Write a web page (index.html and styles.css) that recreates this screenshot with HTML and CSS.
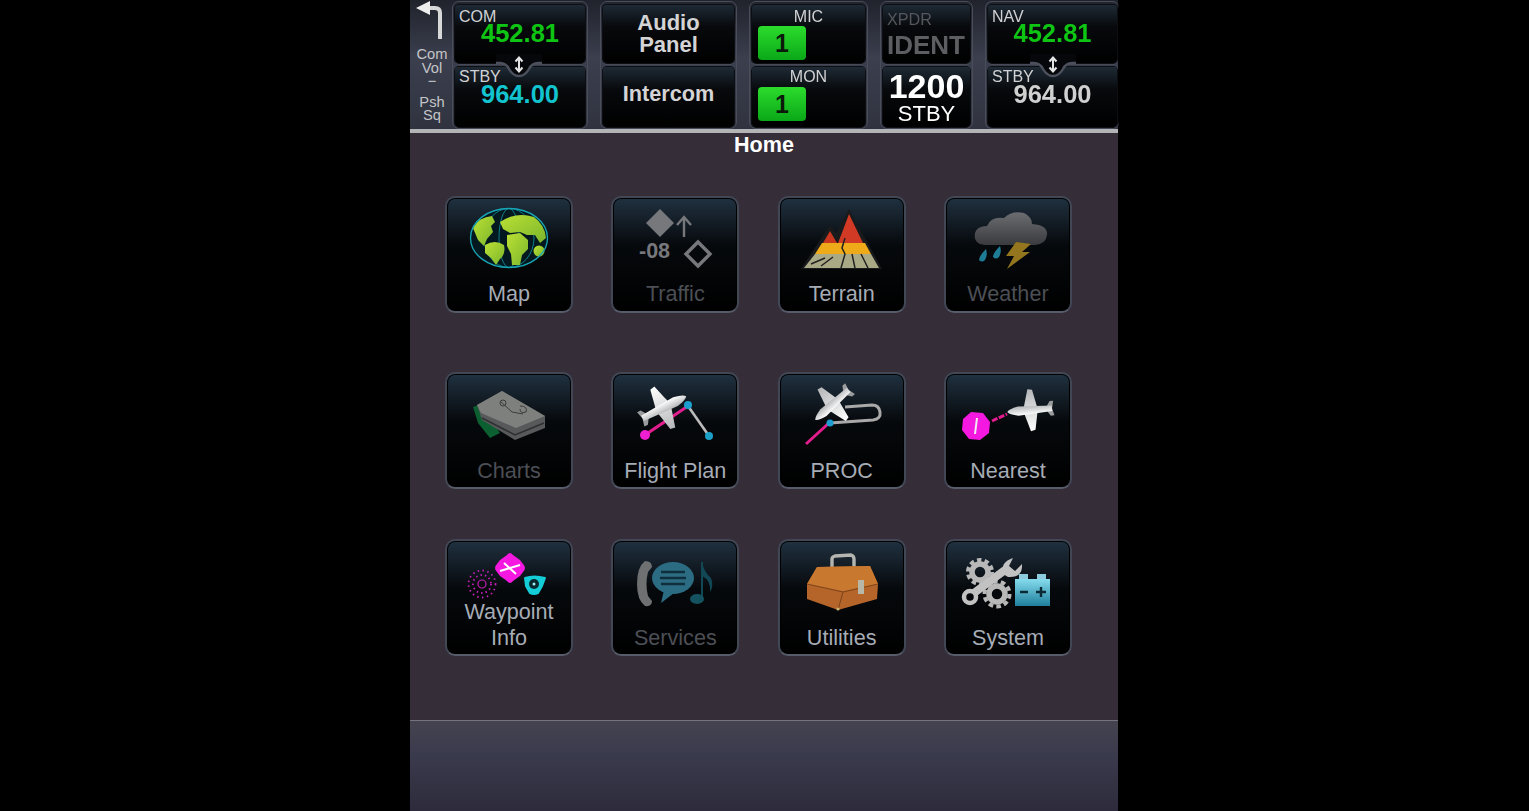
FILE: index.html
```html
<!DOCTYPE html>
<html lang="en">
<head>
<meta charset="UTF-8">
<meta name="viewport" content="width=device-width, initial-scale=1.0">
<title>Home</title>
<link rel="stylesheet" href="styles.css">
</head>
<body>
<svg class="defs" width="0" height="0">
  <defs>
    <linearGradient id="planeFill" x1="0" y1="0" x2="0" y2="1">
      <stop offset="0" stop-color="#ffffff"/>
      <stop offset="1" stop-color="#b4b6b8"/>
    </linearGradient>
    <linearGradient id="batteryFill" x1="0" y1="0" x2="0" y2="1">
      <stop offset="0" stop-color="#86dcee"/>
      <stop offset="1" stop-color="#1f7f9c"/>
    </linearGradient>
    <linearGradient id="cloudFill" x1="0" y1="0" x2="0" y2="1">
      <stop offset="0" stop-color="#6c6d70"/>
      <stop offset="1" stop-color="#3a3b3e"/>
    </linearGradient>
    <linearGradient id="globeFill" x1="0" y1="0" x2="1" y2="1">
      <stop offset="0" stop-color="#bce034"/>
      <stop offset="1" stop-color="#7ab62c"/>
    </linearGradient>
    <symbol id="plane" viewBox="-26 -24 52 48" overflow="visible">
      <path d="M-7 -2L-3 -22L2 -23L8 -2L8 2L2 23L-3 22L-7 2Z" fill="url(#planeFill)"/>
      <path d="M-25 -8L-21 -8L-17 -2L-17 2L-21 8L-25 8L-23 0Z" fill="#9a9c9e"/>
      <path d="M-23 -3L14 -5Q24 -3 26 0Q24 3 14 5L-23 3Z" fill="url(#planeFill)"/>
    </symbol>
  </defs>
</svg>

<div class="frame">
  <header class="radio-bar">
    <div class="knob-help">
      <svg class="back-arrow" width="32" height="40" viewBox="0 0 32 40">
        <path d="M27 39V13Q27 8 22 8H12" fill="none" stroke="#d8d8d8" stroke-width="4"/>
        <path d="M3 8L17 1V15Z" fill="#eeeeee"/>
      </svg>
      <div class="knob-text">Com<br>Vol<br>&minus;</div>
      <div class="knob-text knob-push">Psh<br>Sq</div>
    </div>

    <div class="group group-com">
      <div class="cell">
        <div class="cell-label">COM</div>
        <div class="freq green">452.81</div>
      </div>
      <div class="cell">
        <div class="cell-label">STBY</div>
        <div class="freq cyan">964.00</div>
      </div>
      <svg class="swap" width="46" height="24" viewBox="0 0 46 24">
        <path d="M0 9H4Q10 9 13 15Q17 22 23 22Q29 22 33 15Q36 9 42 9H46V0H0Z" fill="#06070a"/>
        <path d="M0 9H4Q10 9 13 15Q17 22 23 22Q29 22 33 15Q36 9 42 9H46" fill="none" stroke="#4b505c" stroke-width="2.5"/>
        <path d="M23 4V17M19.5 7.5L23 3.5L26.5 7.5M19.5 13.5L23 17.5L26.5 13.5" fill="none" stroke="#e4e4e4" stroke-width="2"/>
      </svg>
    </div>

    <div class="group group-audio">
      <div class="cell cell-center"><div class="audio-text">Audio<br>Panel</div></div>
      <div class="cell cell-center"><div class="intercom-text">Intercom</div></div>
    </div>

    <div class="group group-mic">
      <div class="cell">
        <div class="cell-label centered">MIC</div>
        <div class="channel">1</div>
      </div>
      <div class="cell">
        <div class="cell-label centered">MON</div>
        <div class="channel">1</div>
      </div>
    </div>

    <div class="group group-xpdr">
      <div class="cell">
        <div class="xpdr-label">XPDR</div>
        <div class="ident">IDENT</div>
      </div>
      <div class="cell cell-squawk">
        <div class="squawk">1200</div>
        <div class="squawk-mode">STBY</div>
      </div>
    </div>

    <div class="group group-nav">
      <div class="cell">
        <div class="cell-label">NAV</div>
        <div class="freq green">452.81</div>
      </div>
      <div class="cell">
        <div class="cell-label">STBY</div>
        <div class="freq grey">964.00</div>
      </div>
      <svg class="swap" width="46" height="24" viewBox="0 0 46 24">
        <path d="M0 9H4Q10 9 13 15Q17 22 23 22Q29 22 33 15Q36 9 42 9H46V0H0Z" fill="#06070a"/>
        <path d="M0 9H4Q10 9 13 15Q17 22 23 22Q29 22 33 15Q36 9 42 9H46" fill="none" stroke="#4b505c" stroke-width="2.5"/>
        <path d="M23 4V17M19.5 7.5L23 3.5L26.5 7.5M19.5 13.5L23 17.5L26.5 13.5" fill="none" stroke="#e4e4e4" stroke-width="2"/>
      </svg>
    </div>
  </header>

  <main class="home">
    <h1>Home</h1>
    <div class="tiles">

      <div class="tile">
        <svg class="tile-icon" viewBox="0 0 122 74">
          <ellipse cx="61" cy="40" rx="38.5" ry="29.5" fill="#03191f"/>
          <ellipse cx="61" cy="40" rx="25" ry="29.5" fill="none" stroke="#0f7f8c" stroke-width="1"/>
          <ellipse cx="61" cy="40" rx="10" ry="29.5" fill="none" stroke="#0f7f8c" stroke-width="1"/>
          <path d="M25 30Q31 19 44 18L47 24L43 28L45 34L39 41L36 48L30 42Z" fill="url(#globeFill)"/>
          <path d="M52 24Q68 13 86 19Q97 27 98 40L92 45L87 37L79 37L72 34L62 35L55 31Z" fill="url(#globeFill)"/>
          <path d="M37 47Q47 41 56 47Q58 56 52 61L48 67L43 60L37 55Z" fill="url(#globeFill)"/>
          <path d="M59 37L72 35L80 42L80 51L74 57L72 67L64 67L63 56L59 48Z" fill="url(#globeFill)"/>
          <circle cx="91" cy="53" r="5.5" fill="url(#globeFill)"/>
          <ellipse cx="61" cy="40" rx="38.5" ry="29.5" fill="none" stroke="#18a5b5" stroke-width="1.3"/>
        </svg>
        <div class="tile-label">Map</div>
      </div>

      <div class="tile disabled">
        <svg class="tile-icon" viewBox="0 0 122 74">
          <path d="M46 11L60 25L46 39L32 25Z" fill="#77787c"/>
          <path d="M70 39V20M63 27L70 19L77 27" fill="none" stroke="#77787c" stroke-width="2.4"/>
          <text class="traffic-alt" x="25" y="60">-08</text>
          <path d="M84 44L96 56L84 68L72 56Z" fill="none" stroke="#77787c" stroke-width="3.4"/>
        </svg>
        <div class="tile-label">Traffic</div>
      </div>

      <div class="tile">
        <svg class="tile-icon" viewBox="0 0 122 74">
          <path d="M20 71L49 27L55 35L68 11L101 71Z" fill="#181a1c"/>
          <path d="M68 16L82 45H57L62 32Z" fill="#d23a26"/>
          <path d="M49 33L56 45H42Z" fill="#c8361f"/>
          <path d="M41 45H84L90 56H34Z" fill="#eeaa18"/>
          <path d="M34 56H90L98 70H23Z" fill="#a9a986"/>
          <path d="M40 68L52 59M64 40L61 50L64 56L60 70M71 56L74 70M80 56L87 70M30 66L44 60" fill="none" stroke="#222" stroke-width="1.5"/>
        </svg>
        <div class="tile-label">Terrain</div>
      </div>

      <div class="tile disabled">
        <svg class="tile-icon" viewBox="0 0 122 74">
          <path d="M38 47Q26 46 28 35Q30 28 40 28Q44 18 57 20Q65 12 77 15Q85 19 85 26Q101 27 100 37Q99 46 88 47Z" fill="url(#cloudFill)"/>
          <path d="M69 44L84 46L75 54L83 54L60 71L67 58L59 58Z" fill="#94761f"/>
          <path d="M39 51Q32 58 32 62Q35 65 38 62Q41 57 39 51ZM53 48Q46 55 46 59Q49 62 52 59Q55 54 53 48Z" fill="#1f7c96"/>
        </svg>
        <div class="tile-label">Weather</div>
      </div>

      <div class="tile disabled">
        <svg class="tile-icon" viewBox="0 0 122 74">
          <path d="M25 31L33 28L52 57L42 62L30 47Z" fill="#0c5f30"/>
          <path d="M29 29L54 15L97 40L97 52L67 64L34 44Z" fill="#58595a"/>
          <path d="M29 29L54 15L97 40L68 52L33 37Z" fill="#7e807e"/>
          <path d="M34 42L67 59L96 47" fill="none" stroke="#2e2f30" stroke-width="1.5"/>
          <path d="M52 25L64 36L75 38M72 30Q80 30 78 36Q72 38 72 33" fill="none" stroke="#3b3c3c" stroke-width="1"/>
          <circle cx="55" cy="27" r="3" fill="none" stroke="#3b3c3c"/>
        </svg>
        <div class="tile-label">Charts</div>
      </div>

      <div class="tile">
        <svg class="tile-icon" viewBox="0 0 122 74">
          <path d="M31 59L74 30" fill="none" stroke="#e21d8e" stroke-width="3"/>
          <path d="M74 30L95 60" fill="none" stroke="#bcbcbc" stroke-width="2.6"/>
          <use href="#plane" x="23" y="8" width="52" height="48" transform="rotate(-27 49 32)"/>
          <circle cx="31" cy="59" r="5" fill="#ee1fd0"/>
          <circle cx="74" cy="29" r="4" fill="#1c9fd0"/>
          <circle cx="95" cy="60" r="4" fill="#1c9fc4"/>
        </svg>
        <div class="tile-label">Flight Plan</div>
      </div>

      <div class="tile">
        <svg class="tile-icon" viewBox="0 0 122 74">
          <path d="M25 68L48 47" fill="none" stroke="#e21d8e" stroke-width="3"/>
          <path d="M49 47L92 44Q100 43 99 36Q98 29 91 29L64 31" fill="none" stroke="#a9a9a9" stroke-width="3"/>
          <use href="#plane" x="28" y="6" width="48" height="44" transform="rotate(138 52 28)"/>
          <circle cx="49" cy="47" r="3.5" fill="#1c9fd0"/>
        </svg>
        <div class="tile-label">PROC</div>
      </div>

      <div class="tile">
        <svg class="tile-icon" viewBox="0 0 122 74">
          <path d="M45 45L60 38" fill="none" stroke="#e21d8e" stroke-width="3" stroke-dasharray="6 1.5"/>
          <use href="#plane" x="60" y="12" width="48" height="44" transform="rotate(175 84 34)"/>
          <path d="M24 36L36 37L43 46L42 57L33 64L22 63L15 54L16 43Z" fill="#f418e0"/>
          <path d="M30 42L28 58" fill="none" stroke="#f2e8f0" stroke-width="2"/>
        </svg>
        <div class="tile-label">Nearest</div>
      </div>

      <div class="tile">
        <svg class="tile-icon" viewBox="0 0 122 74">
          <circle cx="34" cy="42" r="4" fill="none" stroke="#c41fb5" stroke-width="1.2"/>
          <circle cx="34" cy="42" r="9" fill="none" stroke="#c41fb5" stroke-width="1.8" stroke-dasharray="1.5 3"/>
          <circle cx="34" cy="42" r="13.5" fill="none" stroke="#c41fb5" stroke-width="1.8" stroke-dasharray="1.5 3.4"/>
          <path d="M59 13Q62 9 65 13L72 18L75 22Q79 26 75 30L72 34L65 39Q62 43 59 39L52 34L49 30Q45 26 49 22L52 18Z" fill="#f418e0"/>
          <path d="M52 29L72 23M56 21L68 32" fill="none" stroke="#fff" stroke-width="2"/>
          <path d="M77 36Q86 33 97 36L94 44L90 51Q86 53 82 51L78 44Z" fill="#14cdd6" stroke="#14cdd6" stroke-width="2" stroke-linejoin="round"/>
          <circle cx="86" cy="42" r="5" fill="#06282e"/>
          <circle cx="86" cy="42" r="1.5" fill="#9feef0"/>
        </svg>
        <div class="tile-label">Waypoint<br>Info</div>
      </div>

      <div class="tile disabled">
        <svg class="tile-icon" viewBox="0 0 122 74">
          <path d="M31 19Q38 19 38 25L34 30Q31 42 34 54L38 59Q38 65 31 64Q23 58 23 42Q23 25 31 19Z" fill="#6e7072"/>
          <ellipse cx="59" cy="36" rx="21" ry="16" fill="#2c6c82"/>
          <path d="M50 48L47 61L60 51Z" fill="#2c6c82"/>
          <path d="M47 30H71M46 36H72M47 42H71" fill="none" stroke="#102f3e" stroke-width="2.4"/>
          <path d="M88 20V57" fill="none" stroke="#124856" stroke-width="2"/>
          <ellipse cx="83" cy="57" rx="7" ry="5" fill="#15525f"/>
          <path d="M88 20Q90 30 97 36Q100 44 96 50Q97 38 88 34Z" fill="#124856"/>
        </svg>
        <div class="tile-label">Services</div>
      </div>

      <div class="tile">
        <svg class="tile-icon" viewBox="0 0 122 74">
          <path d="M51 27V17Q51 15 54 14L70 13Q73 14 73 17V26" fill="none" stroke="#b4b4b0" stroke-width="3.4"/>
          <path d="M36 25L89 24L97 42L96 57L57 68L26 57V42Z" fill="#b5652a"/>
          <path d="M36 25L89 24L97 42L62 49L26 42Z" fill="#c9792f"/>
          <path d="M26 42L62 50L97 42M62 50L57 68" fill="none" stroke="#7d431a" stroke-width="1"/>
          <rect x="77" y="38" width="6" height="14" fill="#b8b8a8"/>
          <circle cx="57" cy="67" r="1.5" fill="#c9b870"/>
        </svg>
        <div class="tile-label">Utilities</div>
      </div>

      <div class="tile">
        <svg class="tile-icon" viewBox="0 0 122 74">
          <circle cx="33" cy="30" r="8" fill="none" stroke="#b8b8b8" stroke-width="5.5"/>
          <circle cx="33" cy="30" r="12" fill="none" stroke="#b8b8b8" stroke-width="4" stroke-dasharray="4.4 3.2"/>
          <circle cx="50" cy="52" r="8" fill="none" stroke="#b8b8b8" stroke-width="5.5"/>
          <circle cx="50" cy="52" r="12.5" fill="none" stroke="#b8b8b8" stroke-width="4" stroke-dasharray="4.6 3.2"/>
          <path d="M27 51L58 28" fill="none" stroke="#c2c2c2" stroke-width="8"/>
          <circle cx="23" cy="55" r="6" fill="none" stroke="#c2c2c2" stroke-width="4.5"/>
          <path d="M56 32Q53 20 66 16L62 24L68 29L75 22Q76 36 61 35Z" fill="#c2c2c2"/>
          <rect x="72" y="32" width="9" height="6" fill="#8ccbdb"/>
          <rect x="90" y="32" width="9" height="6" fill="#8ccbdb"/>
          <rect x="68" y="37" width="35" height="27" fill="url(#batteryFill)"/>
          <path d="M73 50H81M89 50H99M94 45V55" fill="none" stroke="#0b2a36" stroke-width="2.4"/>
        </svg>
        <div class="tile-label">System</div>
      </div>

    </div>
  </main>

  <footer class="bottom-bar"></footer>
</div>
</body>
</html>
```

FILE: styles.css
```css
html, body {
  margin: 0;
  height: 100%;
  background-color: #000;
  overflow: hidden;
}
body {
  font-family: "Liberation Sans", Arial, sans-serif;
}
.defs {
  display: block;
  height: 0;
}
.frame {
  width: 708px;
  height: 811px;
  margin-left: 410px;
  display: flex;
  flex-direction: column;
  filter: blur(0.35px);
}

/* top radio strip */
.radio-bar {
  height: 129px;
  flex: none;
  display: flex;
  gap: 12px;
  background: linear-gradient(#20232c, #3b3f4e 45%, #30333f);
  border-bottom: 4px solid #b4b4b6;
}
.knob-help {
  width: 42px;
  margin-right: -12px;
  flex: none;
  display: flex;
  flex-direction: column;
  align-items: center;
  color: #c4c5c8;
}
.back-arrow {
  display: block;
  margin-left: -4px;
}
.knob-text {
  margin: 8px 0 0 2px;
  font-size: 14.7px;
  line-height: 13.6px;
  text-align: center;
}
.knob-push {
  margin-top: 7px;
}
.group {
  position: relative;
  flex: none;
  height: 128px;
  margin-top: 1px;
  padding: 3px 2px 1px;
  box-sizing: border-box;
  display: flex;
  flex-direction: column;
  gap: 4px;
  border: 1px solid #4a4e5b;
  border-radius: 7px;
}
.group-com { width: 136px; }
.group-audio { width: 137px; }
.group-mic { width: 119px; }
.group-xpdr { width: 93px; }
.group-nav { width: 134px; border-right: none; }
.cell {
  flex: 1;
  min-height: 0;
  border-radius: 4px;
  background: linear-gradient(#1e2a35, #07090c 38%, #000);
  box-shadow: 0 0 0 1px #0c0e12, 0 2px 0 #454a56;
  color: #d8d8da;
}
.cell:first-child {
  flex: none;
  height: 58px;
}
.cell-center {
  display: flex;
  align-items: center;
  justify-content: center;
}
.cell-label {
  padding: 4px 0 0 4px;
  font-size: 16px;
  line-height: 16px;
  color: #d2d2d4;
}
.cell + .cell .cell-label {
  padding-top: 2px;
}
.cell-label.centered {
  padding-left: 0;
  text-align: center;
}
.freq {
  margin-top: -5px;
  font-size: 25.5px;
  font-weight: bold;
  line-height: 26px;
  text-align: center;
}
.cell + .cell .freq {
  margin-top: -4px;
}
.green { color: #0fc514; }
.cyan { color: #12c4cf; }
.grey { color: #d0d0d0; }
.audio-text {
  font-size: 22px;
  font-weight: bold;
  line-height: 22px;
  text-align: center;
  color: #d4d4d6;
}
.intercom-text {
  padding-bottom: 6px;
  font-size: 21.7px;
  font-weight: bold;
  color: #d4d4d6;
}
.channel {
  width: 48px;
  height: 34px;
  margin: 1px 0 0 6px;
  border-radius: 4px;
  background: linear-gradient(#2cdc2c, #0aa818);
  color: #0c1a0c;
  font-size: 25px;
  font-weight: bold;
  line-height: 34px;
  text-align: center;
}
.cell + .cell .channel {
  margin-top: 2px;
}
.xpdr-label {
  padding: 6px 0 0 4px;
  font-size: 16.2px;
  line-height: 17px;
  color: #55575c;
}
.ident {
  padding: 3px 0 0 4px;
  font-size: 26px;
  font-weight: bold;
  line-height: 29px;
  color: #5d5e62;
}
.cell-squawk {
  text-align: center;
  color: #fff;
}
.squawk {
  margin-top: 2px;
  font-size: 34px;
  font-weight: bold;
  line-height: 35px;
}
.squawk-mode {
  font-size: 22px;
  line-height: 20px;
}
.swap {
  position: absolute;
  left: 43px;
  top: 52px;
}
.group-nav .swap {
  left: 44px;
}

/* home menu */
.home {
  height: 587px;
  flex: none;
  background-color: #352e39;
}
.home h1 {
  margin: 0;
  font-size: 21.6px;
  line-height: 24px;
  text-align: center;
  color: #fff;
}
.tiles {
  display: grid;
  grid-template-columns: repeat(4, 128px);
  grid-template-rows: 176px 167px 117px;
  column-gap: 38.33px;
  padding: 39px 0 0 35px;
}
.tile {
  height: 117px;
  box-sizing: border-box;
  border: 2px solid #414754;
  border-bottom-color: #565c69;
  border-radius: 10px;
  background: linear-gradient(#203140, #06090c 42%, #000);
  box-shadow: inset 0 0 0 1px #000;
  display: flex;
  flex-direction: column;
  align-items: center;
  color: #a6acb6;
}
.tile-icon {
  display: block;
  flex: none;
  width: 122px;
  height: 74px;
  margin-bottom: -20px;
}
/* rows two and three sit a little higher than the drawn icon grid */
.tile:nth-child(n+5) .tile-icon {
  margin-top: 2px;
}
.tile:nth-child(n+9) .tile-icon {
  margin-top: 1px;
}
.tile-label {
  margin-top: auto;
  padding-bottom: 3px;
  font-size: 21.6px;
  line-height: 26px;
  text-align: center;
}
.tile:nth-child(-n+4) .tile-label {
  padding-bottom: 4px;
}
.disabled .tile-label {
  color: #4c4f55;
}
.traffic-alt {
  font-family: "Liberation Sans", Arial, sans-serif;
  font-size: 21.5px;
  font-weight: bold;
  fill: #77787c;
}

.bottom-bar {
  flex: 1;
  box-sizing: border-box;
  border-top: 1px solid #76737f;
  background: linear-gradient(#45434f, #3b3b4e 35%, #2d2b3b);
}
```
